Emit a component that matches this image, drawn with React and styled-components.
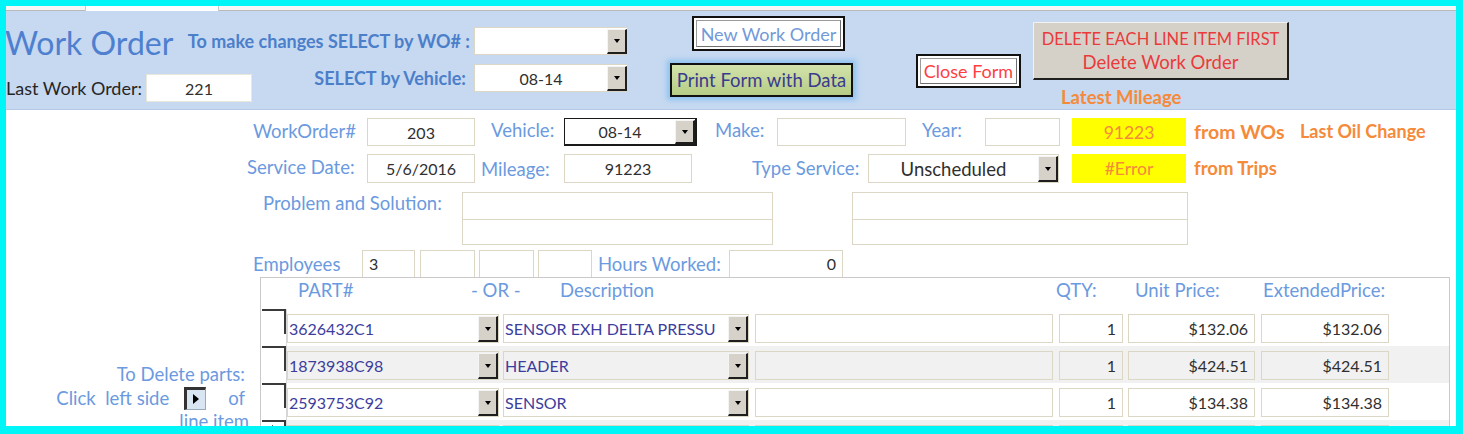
import React from "react";
import styled, { createGlobalStyle } from "styled-components";

const GlobalStyle = createGlobalStyle`
  html, body { margin: 0; padding: 0; background: #ffffff; }
  body { font-family: Lato, "Open Sans", Arial, sans-serif; }
  * { box-sizing: border-box; }
`;

const LABEL_BLUE = "#6b9ae0";
const BOLD_BLUE = "#4c7fca";
const ORANGE = "#f58a3a";
const FIELD_BORDER = "#dcd7c4";
const LABEL_SIZE = 18.5;

const Frame = styled.div`
  width: 1463px;
  height: 434px;
  border-style: solid;
  border-color: #00f6f6;
  border-width: 6px 7px 8px 6px;
  background: #ffffff;
  overflow: hidden;
  display: flex;
  flex-direction: column;
`;

const TabStrip = styled.div`
  height: 5px;
  flex: none;
  background: #f6f6f6;
  border-bottom: 1px solid #b9b9b9;
  display: flex;
`;

const Tab = styled.div`
  margin-left: 79px;
  width: 134px;
  height: 6px;
  background: #ffffff;
  border-right: 1px solid #c9c9c9;
  border-left: 1px solid #c9c9c9;
`;

/* ---------- form header band ---------- */

const Header = styled.div`
  height: 99px;
  flex: none;
  background: #c6d9f1;
  border-bottom: 1px solid #b4c9e6;
  display: flex;
  align-items: flex-start;
`;

const SelectBlock = styled.div`
  width: 622px;
  margin-top: 16px;
  display: flex;
  flex-direction: column;
  gap: 9px;
`;

const SelectRow = styled.div`
  display: flex;
  align-items: center;
  height: 28px;
`;

const Title = styled.h1`
  margin: 4px 0 0 -1px;
  font-size: 32px;
  font-weight: 400;
  color: #4f80cf;
  line-height: 28px;
  white-space: nowrap;
`;

const LastWo = styled.div`
  display: flex;
  align-items: center;
  margin-top: 20px;
  font-size: 18px;
  color: #262626;
  gap: 4px;
  white-space: nowrap;
`;

const SelectGroup = styled.div`
  margin-left: auto;
  display: flex;
  align-items: center;
  gap: ${(p) => p.$gap || 5}px;
`;

const BoldLabel = styled.span`
  font-size: 18px;
  font-weight: 700;
  color: ${BOLD_BLUE};
  white-space: nowrap;
`;

const ButtonColumn = styled.div`
  margin-left: 42px;
  width: 183px;
  display: flex;
  flex-direction: column;
  align-items: flex-start;
`;

const FrameButton = styled.div`
  width: ${(p) => p.$w}px;
  height: ${(p) => p.$h}px;
  margin-top: ${(p) => p.$mt || 0}px;
  margin-left: ${(p) => p.$ml || 0}px;
  border: 2px solid #111111;
  background: #ffffff;
  padding: 2px;
  display: flex;
`;

const FrameFace = styled.div`
  flex: 1;
  display: flex;
  align-items: center;
  justify-content: center;
  border: 1px solid #9a9a9a;
  border-right-color: #6f6f6f;
  border-bottom-color: #6f6f6f;
  font-size: 18px;
  color: ${(p) => p.$color};
  white-space: nowrap;
`;

const PrintButton = styled.div`
  width: 183px;
  height: 34px;
  margin-top: 12px;
  border: 2px solid #111111;
  background: linear-gradient(#d2e2ab, #b7cd86);
  box-shadow: 0 0 5px 3px rgba(130, 190, 240, 0.85);
  display: flex;
  align-items: center;
  justify-content: center;
  font-size: 18.5px;
  color: #3a3b8e;
  white-space: nowrap;
`;

const CloseWrap = styled.div`
  margin-left: 63px;
  margin-top: 43px;
`;

const DeleteColumn = styled.div`
  margin-left: 12px;
  margin-top: 11px;
  display: flex;
  flex-direction: column;
`;

const DeleteButton = styled.div`
  width: 256px;
  height: 58px;
  background: #d5d1c9;
  border-top: 1px solid #f2f2f2;
  border-left: 1px solid #f2f2f2;
  border-right: 2px solid #1f1f1f;
  border-bottom: 2px solid #1f1f1f;
  display: flex;
  flex-direction: column;
  align-items: center;
  justify-content: center;
  gap: 2px;
  line-height: 21px;
  color: #ea3a3c;
  white-space: nowrap;
`;

const DeleteLine = styled.span`
  font-size: ${(p) => p.$size}px;
`;

const OrangeNote = styled.span`
  margin-left: ${(p) => p.$ml || 0}px;
  margin-top: ${(p) => p.$mt || 0}px;
  width: ${(p) => (p.$w ? `${p.$w}px` : "auto")};
  flex: none;
  font-size: ${(p) => p.$size || 18.5}px;
  font-weight: 700;
  color: ${ORANGE};
  white-space: nowrap;
`;

/* ---------- combo box ---------- */

const ComboBox = styled.div`
  width: ${(p) => p.$w}px;
  height: ${(p) => p.$h || 28}px;
  margin-left: ${(p) => p.$ml || 0}px;
  flex: none;
  display: flex;
  background: ${(p) => p.$bg || "#ffffff"};
  border: 1px solid ${(p) => (p.$dark ? "#1a1a1a" : FIELD_BORDER)};
  border-width: ${(p) => (p.$dark ? "1px 2px 2px 1px" : "1px")};
`;

const ComboText = styled.div`
  flex: 1;
  min-width: 0;
  overflow: hidden;
  display: flex;
  align-items: center;
  justify-content: ${(p) => (p.$align === "left" ? "flex-start" : "center")};
  padding: 0 ${(p) => (p.$align === "left" ? 1 : 0)}px;
  font-size: ${(p) => p.$size || 16}px;
  color: ${(p) => p.$color || "#2f2f2f"};
  white-space: nowrap;
`;

const DropButton = styled.div`
  width: 20px;
  flex: none;
  margin: 1px 0 0 0;
  background: #d6d2ca;
  border-top: 1px solid #f4f4f4;
  border-left: 1px solid #f4f4f4;
  border-right: 2px solid #1e1e1e;
  border-bottom: 2px solid #1e1e1e;
  display: flex;
  align-items: center;
  justify-content: center;
`;

const DownArrow = styled.span`
  width: 0;
  height: 0;
  border-left: 3.5px solid transparent;
  border-right: 3.5px solid transparent;
  border-top: 4px solid #000000;
`;

const Combo = ({ w, h, ml, dark, bg, align, color, size, children }) => (
  <ComboBox $w={w} $h={h} $ml={ml} $dark={dark} $bg={bg}>
    <ComboText $align={align} $color={color} $size={size}>
      {children}
    </ComboText>
    <DropButton>
      <DownArrow />
    </DropButton>
  </ComboBox>
);

/* ---------- detail section ---------- */

const Detail = styled.div`
  flex: 1;
  display: flex;
  flex-direction: column;
  padding-top: 8px;
  min-height: 0;
`;

const FormRow = styled.div`
  display: flex;
  align-items: ${(p) => p.$align || "center"};
  height: ${(p) => p.$h}px;
  margin-top: ${(p) => p.$mt || 0}px;
  padding-left: ${(p) => p.$pl}px;
  flex: none;
`;

const Label = styled.span`
  width: ${(p) => p.$w}px;
  margin-left: ${(p) => p.$ml || 0}px;
  margin-top: ${(p) => p.$mt || 0}px;
  flex: none;
  font-size: ${(p) => p.$size || LABEL_SIZE}px;
  color: ${LABEL_BLUE};
  white-space: nowrap;
`;

const TextBox = styled.div`
  width: ${(p) => p.$w}px;
  height: ${(p) => p.$h || 28}px;
  margin-left: ${(p) => p.$ml || 0}px;
  flex: none;
  display: flex;
  align-items: center;
  justify-content: ${(p) =>
    p.$align === "left" ? "flex-start" : p.$align === "right" ? "flex-end" : "center"};
  padding: 0 6px;
  background: ${(p) => p.$bg || "#ffffff"};
  border: 1px solid ${(p) => p.$border || FIELD_BORDER};
  font-size: ${(p) => p.$size || 16}px;
  color: ${(p) => p.$color || "#2f2f2f"};
  white-space: nowrap;
`;

const MemoPair = styled.div`
  width: ${(p) => p.$w}px;
  height: 53px;
  margin-left: ${(p) => p.$ml || 0}px;
  flex: none;
  display: grid;
  grid-template-rows: 1fr 1fr;
  border: 1px solid ${FIELD_BORDER};
  background: #ffffff;
`;

const MemoLine = styled.div`
  & + & {
    border-top: 1px solid ${FIELD_BORDER};
  }
`;

/* ---------- lower area: note + parts subform ---------- */

const Lower = styled.div`
  display: flex;
  flex: 1;
  min-height: 0;
`;

const DeleteNote = styled.div`
  width: 254px;
  flex: none;
  padding-top: 86px;
  padding-right: 15px;
  display: flex;
  flex-direction: column;
  align-items: flex-end;
  font-size: ${LABEL_SIZE}px;
  line-height: 23.5px;
  color: ${LABEL_BLUE};
  white-space: nowrap;
`;

const NoteLine = styled.div`
  display: flex;
  align-items: center;
  margin-right: ${(p) => p.$mr || 0}px;
`;

const NoteGap = styled.span`
  width: ${(p) => p.$w}px;
  flex: none;
`;

const SelectorIcon = styled.span`
  width: 22px;
  height: 23px;
  flex: none;
  background: #d9e5f3;
  border-top: 3px solid #333333;
  border-left: 3px solid #333333;
  border-right: 1px solid #99aabb;
  border-bottom: 1px solid #99aabb;
  display: flex;
  align-items: center;
  justify-content: center;
`;

const RightArrow = styled.span`
  width: 0;
  height: 0;
  border-top: 5px solid transparent;
  border-bottom: 5px solid transparent;
  border-left: 6px solid #000000;
`;

const Subform = styled.div`
  flex: 1;
  margin-right: 6px;
  border: 1px solid #c9c9c9;
  border-bottom: none;
  display: flex;
  flex-direction: column;
`;

const SubHead = styled.div`
  height: 31px;
  flex: none;
  display: flex;
  align-items: center;
  padding-bottom: 8px;
`;

const HeadLabel = styled.span`
  width: ${(p) => (p.$w ? `${p.$w}px` : "auto")};
  margin-left: ${(p) => p.$ml || 0}px;
  flex: none;
  font-size: ${LABEL_SIZE}px;
  color: ${LABEL_BLUE};
  white-space: nowrap;
`;

const PartRow = styled.div`
  height: 37px;
  flex: none;
  display: flex;
`;

const RecordSelector = styled.div`
  position: relative;
  width: 26px;
  flex: none;
  border-right: 1px solid #d6d6d6;
  display: flex;
  align-items: flex-start;
  justify-content: center;

  &::before {
    content: "";
    position: absolute;
    top: 0;
    left: 1px;
    right: 0;
    height: 23px;
    border-top: 2px solid #3a3a3a;
    border-right: 2px solid #3a3a3a;
  }
`;

const NewRecordMark = styled.span`
  margin-top: 5px;
  width: 0;
  height: 0;
  border-top: 3px solid transparent;
  border-bottom: 3px solid transparent;
  border-left: 4px solid #000000;
`;

const RowBody = styled.div`
  flex: 1;
  display: flex;
  align-items: flex-start;
  padding-top: 5px;
  background: ${(p) => (p.$alt ? "#f1f1f1" : "#ffffff")};
`;

const parts = [
  { part: "3626432C1", desc: "SENSOR EXH DELTA PRESSU", qty: "1", unit: "$132.06", ext: "$132.06" },
  { part: "1873938C98", desc: "HEADER", qty: "1", unit: "$424.51", ext: "$424.51" },
  { part: "2593753C92", desc: "SENSOR", qty: "1", unit: "$134.38", ext: "$134.38" },
  { part: "", desc: "", qty: "", unit: "", ext: "", isNew: true },
];

const PART_BLUE = "#3c3d9d";

export default function App() {
  return (
    <>
      <GlobalStyle />
      <Frame>
        <TabStrip>
          <Tab />
        </TabStrip>

        <Header>
          <SelectBlock>
            <SelectRow>
              <Title>Work Order</Title>
              <SelectGroup $gap={4}>
                <BoldLabel>To make changes SELECT by WO# :</BoldLabel>
                <Combo w={154} />
              </SelectGroup>
            </SelectRow>
            <SelectRow>
              <LastWo>
                Last Work Order:
                <TextBox $w={106} $border="#e9e6da">221</TextBox>
              </LastWo>
              <SelectGroup $gap={8}>
                <BoldLabel>SELECT by Vehicle:</BoldLabel>
                <Combo w={154}>08-14</Combo>
              </SelectGroup>
            </SelectRow>
          </SelectBlock>

          <ButtonColumn>
            <FrameButton $w={153} $h={35} $mt={5} $ml={22}>
              <FrameFace $color="#7299d8">New Work Order</FrameFace>
            </FrameButton>
            <PrintButton>Print Form with Data</PrintButton>
          </ButtonColumn>

          <CloseWrap>
            <FrameButton $w={105} $h={34}>
              <FrameFace $color="#ff3f3f">Close Form</FrameFace>
            </FrameButton>
          </CloseWrap>

          <DeleteColumn>
            <DeleteButton>
              <DeleteLine $size={16.5}>DELETE EACH LINE ITEM FIRST</DeleteLine>
              <DeleteLine $size={18.5}>Delete Work Order</DeleteLine>
            </DeleteButton>
            <OrangeNote $ml={28} $mt={6}>
              Latest Mileage
            </OrangeNote>
          </DeleteColumn>
        </Header>

        <Detail>
          <FormRow $h={28} $pl={247}>
            <Label $w={114} $mt={-2}>
              WorkOrder#
            </Label>
            <TextBox $w={108}>203</TextBox>
            <Label $w={73} $ml={16} $mt={-5}>
              Vehicle:
            </Label>
            <Combo w={133} dark>
              08-14
            </Combo>
            <Label $w={62} $ml={18} $mt={-4}>
              Make:
            </Label>
            <TextBox $w={129} />
            <Label $w={63} $ml={16} $mt={-4}>
              Year:
            </Label>
            <TextBox $w={75} />
            <TextBox $w={114} $ml={12} $bg="#ffff00" $border="#ffff00" $color={ORANGE} $size={17.5}>
              91223
            </TextBox>
            <OrangeNote $ml={8} $w={106} $size={19.5} $mt={-2}>
              from WOs
            </OrangeNote>
            <OrangeNote $size={18} $mt={-2}>
              Last Oil Change
            </OrangeNote>
          </FormRow>

          <FormRow $h={29} $mt={8} $pl={241}>
            <Label $w={120} $mt={-4}>
              Service Date:
            </Label>
            <TextBox $w={108} $h={29}>
              5/6/2016
            </TextBox>
            <Label $w={83} $ml={6}>
              Mileage:
            </Label>
            <TextBox $w={128} $h={29}>
              91223
            </TextBox>
            <Label $w={116} $ml={60} $mt={-2}>
              Type Service:
            </Label>
            <Combo w={191} h={29} size={18.5}>
              Unscheduled
            </Combo>
            <TextBox
              $w={114}
              $h={29}
              $ml={13}
              $bg="#ffff00"
              $border="#ffff00"
              $color={ORANGE}
              $size={17.5}
            >
              #Error
            </TextBox>
            <OrangeNote $ml={8} $mt={-2}>
              from Trips
            </OrangeNote>
          </FormRow>

          <FormRow $h={53} $mt={9} $pl={257} $align="flex-start">
            <Label $w={199} $mt={0}>
              Problem and Solution:
            </Label>
            <MemoPair $w={311}>
              <MemoLine />
              <MemoLine />
            </MemoPair>
            <MemoPair $w={336} $ml={79}>
              <MemoLine />
              <MemoLine />
            </MemoPair>
          </FormRow>

          <FormRow $h={27} $mt={5} $pl={247}>
            <Label $w={109}>Employees</Label>
            <TextBox $w={53} $h={28} $align="left">
              3
            </TextBox>
            <TextBox $w={55} $h={28} $ml={5} />
            <TextBox $w={55} $h={28} $ml={4} />
            <TextBox $w={54} $h={28} $ml={4} />
            <Label $w={131} $ml={6}>
              Hours Worked:
            </Label>
            <TextBox $w={114} $h={28} $align="right">
              0
            </TextBox>
          </FormRow>

          <Lower>
            <DeleteNote>
              <NoteLine>To Delete parts:</NoteLine>
              <NoteLine>
                Click&nbsp; left side
                <NoteGap $w={15} />
                <SelectorIcon>
                  <RightArrow />
                </SelectorIcon>
                <NoteGap $w={22} />
                of
              </NoteLine>
              <NoteLine $mr={-4}>line item</NoteLine>
            </DeleteNote>

            <Subform>
              <SubHead>
                <HeadLabel $ml={37} $w={173}>
                  PART#
                </HeadLabel>
                <HeadLabel $w={89}>- OR -</HeadLabel>
                <HeadLabel $w={496}>Description</HeadLabel>
                <HeadLabel $w={79}>QTY:</HeadLabel>
                <HeadLabel $w={128}>Unit Price:</HeadLabel>
                <HeadLabel>ExtendedPrice:</HeadLabel>
              </SubHead>

              {parts.map((row, i) => {
                const alt = i % 2 === 1;
                const bg = alt ? "#f1f1f1" : "#ffffff";
                return (
                  <PartRow key={i}>
                    <RecordSelector>{row.isNew && <NewRecordMark />}</RecordSelector>
                    <RowBody $alt={alt}>
                      <Combo w={212} h={29} bg={bg} align="left" color={PART_BLUE}>
                        {row.part}
                      </Combo>
                      <Combo w={246} h={29} ml={4} bg={bg} align="left" color={PART_BLUE}>
                        {row.desc}
                      </Combo>
                      <TextBox $w={298} $h={29} $ml={6} $bg={bg} />
                      <TextBox $w={64} $h={29} $ml={6} $bg={bg} $align="right">
                        {row.qty}
                      </TextBox>
                      <TextBox $w={127} $h={29} $ml={5} $bg={bg} $align="right">
                        {row.unit}
                      </TextBox>
                      <TextBox $w={128} $h={29} $ml={6} $bg={bg} $align="right">
                        {row.ext}
                      </TextBox>
                    </RowBody>
                  </PartRow>
                );
              })}
            </Subform>
          </Lower>
        </Detail>
      </Frame>
    </>
  );
}
